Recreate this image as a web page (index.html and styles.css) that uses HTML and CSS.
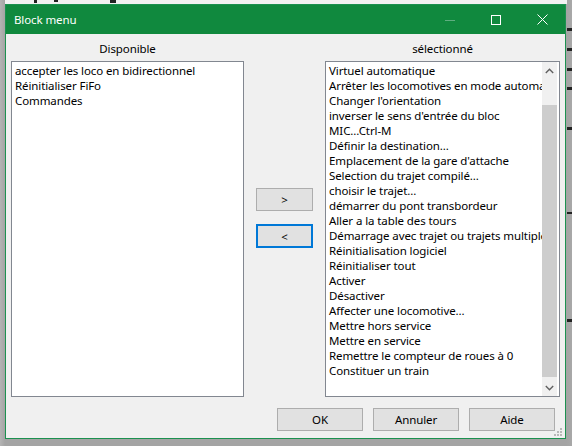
FILE: index.html
```html
<!DOCTYPE html>
<html lang="fr">
<head>
<meta charset="utf-8">
<title>Block menu</title>
<link rel="stylesheet" href="styles.css">
</head>
<body>
<div class="desk">
  <div class="desk-top"></div>
  <span class="mark m1"></span><span class="mark m2"></span><span class="mark m3"></span>
  <span class="mark r1"></span><span class="mark r2"></span><span class="mark r3"></span><span class="mark r4"></span><span class="mark r5"></span><span class="mark r6"></span><span class="mark r7"></span>

  <div class="window">
    <div class="titlebar">
      <span class="title">Block menu</span>
      <div class="controls">
        <span class="ctl"><svg width="10" height="10" viewBox="0 0 10 10"><path d="M0 5.5H10" stroke="#5fae80" stroke-width="1"/></svg></span>
        <span class="ctl"><svg width="10" height="10" viewBox="0 0 10 10"><rect x="0.5" y="0.5" width="9" height="9" fill="none" stroke="#fff" stroke-width="1"/></svg></span>
        <span class="ctl"><svg width="11" height="11" viewBox="0 0 11 11"><path d="M0.5 0.5L10.5 10.5M10.5 0.5L0.5 10.5" stroke="#fff" stroke-width="1"/></svg></span>
      </div>
    </div>
    <div class="client">
      <div class="panes">
        <div class="label">Disponible</div>
        <div></div>
        <div class="label">sélectionné</div>

        <div class="list">
          <div class="items">
            <div>accepter les loco en bidirectionnel</div>
            <div>Réinitialiser FiFo</div>
            <div>Commandes</div>
          </div>
        </div>

        <div class="movers">
          <button class="btn move">&gt;</button>
          <button class="btn move focus">&lt;</button>
        </div>

        <div class="list">
          <div class="items">
            <div>Virtuel automatique</div>
            <div>Arrêter les locomotives en mode automatique</div>
            <div>Changer l'orientation</div>
            <div>inverser le sens d'entrée du bloc</div>
            <div>MIC...Ctrl-M</div>
            <div>Définir la destination...</div>
            <div>Emplacement de la gare d'attache</div>
            <div>Selection du trajet compilé...</div>
            <div>choisir le trajet...</div>
            <div>démarrer du pont transbordeur</div>
            <div>Aller a la table des tours</div>
            <div>Démarrage avec trajet ou trajets multiples</div>
            <div>Réinitialisation logiciel</div>
            <div>Réinitialiser tout</div>
            <div>Activer</div>
            <div>Désactiver</div>
            <div>Affecter une locomotive...</div>
            <div>Mettre hors service</div>
            <div>Mettre en service</div>
            <div>Remettre le compteur de roues à 0</div>
            <div>Constituer un train</div>
          </div>
          <div class="scrollbar">
            <div class="arrow"><svg width="9" height="6" viewBox="0 0 9 6"><path d="M0.8 5L4.5 1.3L8.2 5" fill="none" stroke="#606060" stroke-width="1.4"/></svg></div>
            <div class="track"><div class="thumb"></div></div>
            <div class="arrow"><svg width="9" height="6" viewBox="0 0 9 6"><path d="M0.8 1L4.5 4.7L8.2 1" fill="none" stroke="#606060" stroke-width="1.4"/></svg></div>
          </div>
        </div>
      </div>
      <div class="actions">
        <button class="btn act">OK</button>
        <button class="btn act">Annuler</button>
        <button class="btn act">Aide</button>
      </div>
    </div>
    <svg class="grip" width="10" height="10" viewBox="0 0 10 10">
      <rect x="7" y="1" width="2" height="2" fill="#b8b8b8"/>
      <rect x="4" y="4" width="2" height="2" fill="#b8b8b8"/>
      <rect x="7" y="4" width="2" height="2" fill="#b8b8b8"/>
      <rect x="1" y="7" width="2" height="2" fill="#b8b8b8"/>
      <rect x="4" y="7" width="2" height="2" fill="#b8b8b8"/>
      <rect x="7" y="7" width="2" height="2" fill="#b8b8b8"/>
    </svg>
  </div>
</div>
</body>
</html>
```
FILE: styles.css
```css
* { box-sizing: border-box; }

html, body {
  margin: 0;
  padding: 0;
}

body {
  width: 572px;
  height: 446px;
  overflow: hidden;
  background: #a9a9a9;
  font-family: "Noto Sans", "Open Sans", sans-serif;
  font-size: 11.5px;
  letter-spacing: -0.1px;
  color: #000;
}

.desk {
  position: relative;
  width: 572px;
  height: 446px;
  padding: 4px 0 0 5px;
  background: linear-gradient(to right, #b4b4b4 0, #a4a4a4 5px, #a4a4a4 566px, #a8a8a8 572px);
}

.desk-top {
  position: absolute;
  left: 5px;
  top: 0;
  width: 562px;
  height: 4px;
  background: #f2f2f2;
}

.mark {
  position: absolute;
  background: #222;
}
.m1 { left: 34px; top: 0; width: 3px; height: 3px; }
.m2 { left: 54px; top: 0; width: 4px; height: 2px; }
.m3 { left: 110px; top: 0; width: 6px; height: 3px; }
.r1 { left: 567px; top: 28px; width: 5px; height: 3px; }
.r2 { left: 567px; top: 48px; width: 5px; height: 3px; }
.r3 { left: 567px; top: 68px; width: 5px; height: 3px; }
.r4 { left: 567px; top: 87px; width: 5px; height: 3px; }
.r5 { left: 567px; top: 127px; width: 5px; height: 3px; }
.r6 { left: 567px; top: 212px; width: 5px; height: 2px; }
.r7 { left: 567px; top: 319px; width: 5px; height: 3px; }

.window {
  position: relative;
  width: 561px;
  height: 435px;
  border: 1px solid #1c9150;
  background: #f0f0f0;
  display: flex;
  flex-direction: column;
}

.titlebar {
  height: 29px;
  background: #10893e;
  color: #fff;
  display: flex;
  align-items: center;
  justify-content: space-between;
  flex: none;
}

.title {
  padding-left: 8px;
  line-height: 29px;
}

.controls {
  display: flex;
  height: 29px;
}

.ctl {
  width: 46px;
  height: 29px;
  display: flex;
  align-items: center;
  justify-content: center;
}

.client {
  flex: 1;
  display: flex;
  flex-direction: column;
  padding: 0 0 0 5px;
}

.panes {
  display: grid;
  grid-template-columns: 233px 81px 235px;
  grid-template-rows: 27px 336px;
}

.label {
  text-align: center;
  line-height: 27px;
  padding-top: 1px;
}

.list {
  border: 1px solid #828790;
  background: #fff;
  display: flex;
  overflow: hidden;
}

.items {
  flex: 1;
  padding: 1px 0 0 3px;
  line-height: 15px;
  white-space: nowrap;
  overflow: hidden;
}

.scrollbar {
  width: 15px;
  margin-right: 2px;
  background: #f0f0f0;
  display: flex;
  flex-direction: column;
  flex: none;
}

.arrow {
  height: 17px;
  display: flex;
  align-items: center;
  justify-content: center;
  flex: none;
}

.track {
  flex: 1;
  padding-top: 26px;
}

.thumb {
  height: 272px;
  background: #cdcdcd;
}

.movers {
  display: flex;
  flex-direction: column;
  align-items: center;
  padding-top: 127px;
  gap: 13px;
}

.btn {
  font-family: inherit;
  font-size: inherit;
  letter-spacing: inherit;
  color: #000;
  background: #e1e1e1;
  border: 1px solid #adadad;
  padding: 0;
  margin: 0;
}

.move {
  width: 57px;
  height: 23px;
}

.move.focus {
  border: 2px solid #0078d7;
  height: 24px;
}

.actions {
  display: flex;
  justify-content: flex-end;
  gap: 10px;
  padding-right: 10px;
  margin-top: 11px;
}

.act {
  width: 86px;
  height: 23px;
}

.grip {
  position: absolute;
  right: 2px;
  bottom: 1px;
}
```
